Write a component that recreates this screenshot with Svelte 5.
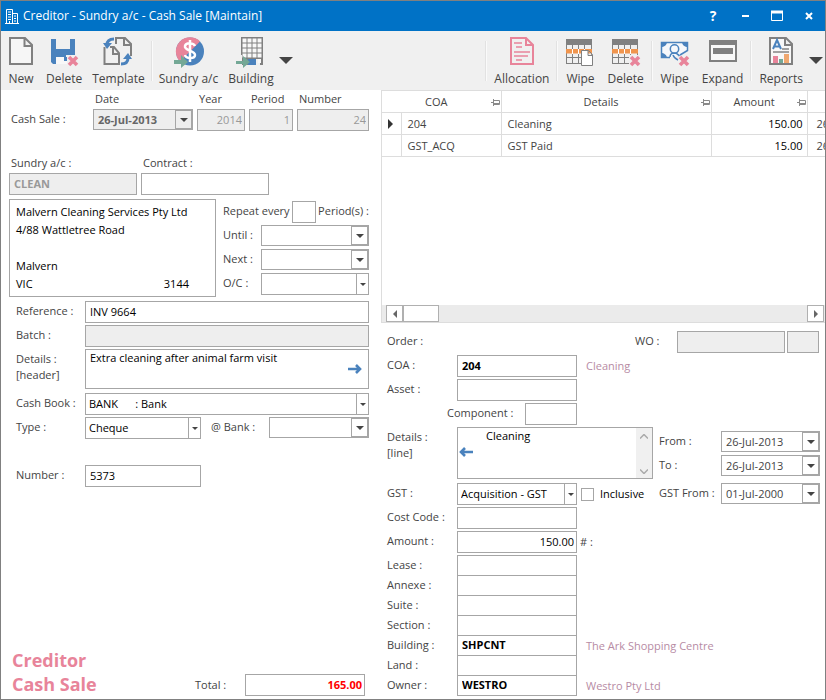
<script>
    const leftTools = [
        { icon: "new", text: "New" },
        { icon: "delete", text: "Delete" },
        { icon: "template", text: "Template" },
        { sep: true },
        { icon: "sundry", text: "Sundry a/c" },
        { icon: "building", text: "Building" }
    ];

    const rightTools = [
        { sep: true },
        { icon: "allocation", text: "Allocation" },
        { sep: true },
        { icon: "wipeRow", text: "Wipe" },
        { icon: "deleteRow", text: "Delete" },
        { sep: true },
        { icon: "wipeMoney", text: "Wipe" },
        { icon: "expand", text: "Expand" },
        { sep: true },
        { icon: "reports", text: "Reports" }
    ];

    const lines = [
        { coa: "204", details: "Cleaning", amount: "150.00", from: "26-Jul-2013" },
        { coa: "GST_ACQ", details: "GST Paid", amount: "15.00", from: "26-Jul-2013" }
    ];

    let places = $state([
        { id: "lease", text: "Lease", value: "", note: "" },
        { id: "annexe", text: "Annexe", value: "", note: "" },
        { id: "suite", text: "Suite", value: "", note: "" },
        { id: "section", text: "Section", value: "", note: "" },
        { id: "building", text: "Building", value: "SHPCNT", note: "The Ark Shopping Centre" },
        { id: "land", text: "Land", value: "", note: "" },
        { id: "owner", text: "Owner", value: "WESTRO", note: "Westro Pty Ltd" }
    ]);

    let current = $state(0);
    let inclusive = $state(false);
</script>

{#snippet cross()}
    <path d="M20 20l8 8M28 20l-8 8" stroke="#e8849a" stroke-width="3.6" />
{/snippet}

{#snippet rowGrid()}
    <path d="M1 2h26v6H1z" fill="#808080" />
    <path d="M1.5 8v19M7.5 8v19M13.5 8v19M19.5 8v19M26.5 8v19M1 20.5h26M1 26.5h26" stroke="#808080" />
    <path d="M1 12h26v4.500H1z" fill="#f0954e" />
    <path d="M7.500 12v5M13.500 12v5M19.500 12v5" stroke="#fff" />
{/snippet}

{#snippet icon(name)}
    <svg class="icon" viewBox="0 0 30 30" fill="none" aria-hidden="true">
        {#if name === "new"}
            <path d="M4 1h15l7 7v19H4zM18.500 1v8H26" fill="#f6f6f6" stroke="#808080" stroke-width="2" />
        {:else if name === "delete"}
            <path d="M2 2h5v10h14V2h5v16h-9v4H7v5H4l-2-2z" fill="#4a82bd" />
            <path d="M7 20h11v7H7z" fill="#f8f8f8" />
            <path d="M15 20h3v4h-3z" fill="#4a82bd" />
            {@render cross()}
        {:else if name === "template"}
            <path d="M13 7V1h9l6 6v12M21 1v7h7" stroke="#808080" stroke-width="2" />
            <path d="M1.500 10v17H16V16l-5-6H7M10 10v7h6" stroke="#808080" stroke-width="2" />
            <path d="M11 2C6 2 4 4 4 8" stroke="#4a82bd" stroke-width="3" />
            <path d="M0 6h9l-5 6z" fill="#4a82bd" />
            <path d="M18 27c5 0 7-2 7-6" stroke="#4a82bd" stroke-width="3" />
            <path d="M20 22h9l-4-6z" fill="#4a82bd" />
        {:else if name === "sundry"}
            <circle cx="16" cy="14.500" r="14" fill="#4a82bd" />
            <path d="M6 24.500A14 14 0 0 1 26 4.500z" fill="#e8849a" />
            <path d="M21 9c-1-3-9-4-10 0-1 5 10 4 10 9 0 4-9 4-10 0M16 3v22" stroke="#fff" stroke-width="2.500" />
            <path d="M0 23h7v-5l7 7-7 6v-4H0z" fill="#74a896" />
        {:else if name === "building"}
            <path d="M5 0h22v28h-3v-6h-5v6H6V18H5z" fill="#808080" />
            <path d="M6.500 1.500h4v4h-4zm5 0h4v4h-4zm5 0h4v4h-4zm5 0h4v4h-4zM6.500 6.500h4v4h-4zm5 0h4v4h-4zm5 0h4v4h-4zm5 0h4v4h-4zM6.500 11.500h4v4h-4zm5 0h4v4h-4zm5 0h4v4h-4zm5 0h4v4h-4zM6.500 16.500h4v4h-4zm5 0h4v4h-4zm5 0h4v4h-4zm5 0h4v4h-4zM22 22h3v4h-3z" fill="#f8f8f8" />
            <path d="M12 22h8v6h-8z" fill="#4a82bd" />
            <path d="M0 24h7v-5l7 6-7 6v-4H0z" fill="#74a896" />
        {:else if name === "allocation"}
            <path d="M4 1h15l7 7v19H4zM19 1v7h7" stroke="#e8849a" stroke-width="2" />
            <path d="M7 6h8M9 10h6M7 15h16M7 19h14M9 23h6" stroke="#e8849a" stroke-width="1.600" />
        {:else if name === "wipeRow"}
            {@render rowGrid()}
            <path d="M16.500 13.500h7l4 4v11h-11zM23 13.500v5h5" fill="#fff" stroke="#808080" />
        {:else if name === "deleteRow"}
            {@render rowGrid()}
            <path d="M18 18h11v12H18z" fill="#f0f0f0" />
            {@render cross()}
        {:else if name === "wipeMoney"}
            <path d="M10 20.500H1.500v-15h26v8L20 18" fill="#f6f8fb" stroke="#4a82bd" stroke-width="1.500" />
            <path d="M1 5h6c0 3-3 5-6 5zM28 5h-6c0 3 3 5 6 5zM1 21h6c0-3-3-5-6-5z" fill="#4a82bd" />
            <circle cx="14.500" cy="12" r="4.200" stroke="#4a82bd" stroke-width="1.500" />
            <path d="M10 20c0-3 2-4 4.500-4s3 1 5 3M13 18c1 3 3 4 5 5" stroke="#4a82bd" stroke-width="1.500" />
            {@render cross()}
        {:else if name === "expand"}
            <path d="M2 4h26v20H2z" fill="#f8f8f8" stroke="#808080" stroke-width="2" />
            <path d="M1 3h28v5H1zM5 11h20v6H5z" fill="#808080" />
        {:else}
            <path d="M4 1h16l6 6v20H4zM19 1v7h7" fill="#f8f8f8" stroke="#808080" stroke-width="2" />
            <path d="M7 12l4-9 4 9M8 9.500h6" stroke="#4a82bd" stroke-width="2" />
            <path d="M16 12h7M7 15h16" stroke="#4a4a4a" />
            <path d="M7 19h5v7H7z" fill="#e8849a" />
            <path d="M13 22h4v4h-4z" fill="#74a896" />
            <path d="M18 17h5v9h-5z" fill="#f0a870" />
        {/if}
    </svg>
{/snippet}

{#snippet tool(t)}
    {#if t.sep}
        <span class="sep"></span>
    {:else}
        <button class="tool">
            {@render icon(t.icon)}
            {t.text}
        </button>
    {/if}
{/snippet}

{#snippet arrow()}
    <svg class="arrow" viewBox="0 0 8 4" aria-hidden="true"><path d="M0 0h8L4 4z" fill="#444" /></svg>
{/snippet}

{#snippet dateBox(id, value, extra)}
    <div class="date {extra}">
        <input {id} {value} disabled={extra === "locked"} />
        <button aria-label="Open calendar" disabled={extra === "locked"}>{@render arrow()}</button>
    </div>
{/snippet}

{#snippet choice(id, value)}
    <div class="choice">
        <select {id}><option>{value}</option></select>
        <span class="drop"><svg viewBox="0 0 6 3" aria-hidden="true"><path d="M0 0h6L3 3z" fill="#444" /></svg></span>
    </div>
{/snippet}

{#snippet pin()}
    <svg class="pin" viewBox="0 0 9 7" fill="none" aria-hidden="true"><path d="M0 3.500h3M2.500 0v7M3 1.500h5.500v4H3M3 4.500h5" stroke="#8a8a8a" /></svg>
{/snippet}

<div class="window">
    <header>
        <svg class="logo" viewBox="0 0 14 16" fill="none" aria-hidden="true">
            <path d="M1.500 15V1.500h6V15M7.500 5.500h5V15M0 15.500h14M3 4h3M3 6.500h3M3 9h3M3 11.500h3M9 8h2M9 10.500h2M9 13h2M4.500 13v2" stroke="#fff" />
        </svg>
        <h1>Creditor - Sundry a/c - Cash Sale [Maintain]</h1>
        <button aria-label="Help"><b>?</b></button>
        <button aria-label="Minimise"><svg viewBox="0 0 12 12"><path d="M3 6h7" stroke="#fff" stroke-width="2" /></svg></button>
        <button aria-label="Maximise"><svg viewBox="0 0 12 12" fill="none"><path d="M.5 1.500h11v9H.5z" stroke="#fff" /><path d="M0 2h12" stroke="#fff" stroke-width="3" /></svg></button>
        <button aria-label="Close"><svg viewBox="0 0 12 12"><path d="M3 3l6 6M9 3l-6 6" stroke="#fff" stroke-width="2" /></svg></button>
    </header>

    <nav>
        <div class="tools tight">
            {#each leftTools as t}{@render tool(t)}{/each}
            <button class="more" aria-label="More records"><svg viewBox="0 0 14 7"><path d="M0 0h14L7 7z" fill="#444" /></svg></button>
        </div>
        <div class="tools">
            {#each rightTools as t}{@render tool(t)}{/each}
            <button class="more" aria-label="More reports"><svg viewBox="0 0 14 7"><path d="M0 0h14L7 7z" fill="#444" /></svg></button>
        </div>
    </nav>

    <main>
        <section class="left">
            <div class="sale">
                <span></span>
                <label for="saleDate">Date</label>
                <label for="year">Year</label>
                <label for="period">Period</label>
                <label for="saleNo">Number</label>
                <span class="name">Cash Sale :</span>
                {@render dateBox("saleDate", "26-Jul-2013", "locked")}
                <input id="year" class="num" value="2014" disabled />
                <input id="period" class="num" value="1" disabled />
                <input id="saleNo" class="num" value="24" disabled />
            </div>

            <div class="account">
                <label for="sundry">Sundry a/c :</label>
                <label for="contract">Contract :</label>
                <input id="sundry" class="bold" value="CLEAN" disabled />
                <input id="contract" />
            </div>

            <div class="party">
                <div class="address">
                    <p>Malvern Cleaning Services Pty Ltd</p>
                    <p>4/88 Wattletree Road</p>
                    <p></p>
                    <p>Malvern</p>
                    <p class="state"><span>VIC</span><span>3144</span></p>
                </div>
                <div class="repeat">
                    <div class="every">
                        <label for="every">Repeat every</label>
                        <input id="every" />
                        <span>Period(s) :</span>
                    </div>
                    <label for="until">Until :</label>
                    {@render dateBox("until", "", "")}
                    <label for="next">Next :</label>
                    {@render dateBox("next", "", "")}
                    <label for="oc">O/C :</label>
                    {@render choice("oc", "")}
                </div>
            </div>

            <div class="entry">
                <label for="reference">Reference :</label>
                <input id="reference" value="INV 9664" />
                <label for="batch">Batch :</label>
                <input id="batch" disabled />
                <label class="tall" for="headDetails">Details :<br />[header]</label>
                <div class="memo head">
                    <textarea id="headDetails">Extra cleaning after animal farm visit</textarea>
                    <button class="copy" aria-label="Copy details to line"><svg viewBox="0 0 14 10" fill="none"><path d="M0 5h12M8 1l4 4-4 4" stroke="#4a82bd" stroke-width="2.600" /></svg></button>
                </div>
            </div>
            <div class="entry">
                <label for="cashBook">Cash Book :</label>
                {@render choice("cashBook", "BANK\u00a0\u00a0\u00a0\u00a0\u00a0\u00a0: Bank")}
                <label for="type">Type :</label>
                <div class="pair">
                    {@render choice("type", "Cheque")}
                    <label for="bank">@ Bank :</label>
                    {@render dateBox("bank", "", "")}
                </div>
            </div>
            <div class="entry cheque">
                <label for="chequeNo">Number :</label>
                <div class="pair"><input id="chequeNo" value="5373" /></div>
            </div>

            <div class="total">
                <h2>Creditor<br />Cash Sale</h2>
                <label for="total">Total :</label>
                <input id="total" class="num bold" value="165.00" readonly />
            </div>
        </section>

        <section class="right">
            <div class="grid">
                <table>
                    <colgroup>
                        <col class="pick" />
                        <col class="coa" />
                        <col class="wide" />
                        <col class="amount" />
                        <col />
                    </colgroup>
                    <thead>
                        <tr>
                            <th colspan="2">COA{@render pin()}</th>
                            <th>Details{@render pin()}</th>
                            <th>Amount{@render pin()}</th>
                            <th></th>
                        </tr>
                    </thead>
                    <tbody>
                        {#each lines as line, i}
                            <tr onclick={() => (current = i)}>
                                <td class="marker">{#if current === i}<svg viewBox="0 0 5 10"><path d="M0 0l5 5-5 5z" fill="#333" /></svg>{/if}</td>
                                <td>{line.coa}</td>
                                <td>{line.details}</td>
                                <td class="money">{line.amount}</td>
                                <td>{line.from}</td>
                            </tr>
                        {/each}
                    </tbody>
                </table>
                <div class="scroll">
                    <button aria-label="Scroll left"><svg viewBox="0 0 4 8"><path d="M4 0v8L0 4z" fill="#666" /></svg></button>
                    <span class="thumb"></span>
                    <button class="end" aria-label="Scroll right"><svg viewBox="0 0 4 8"><path d="M0 0v8l4-4z" fill="#666" /></svg></button>
                </div>
            </div>

            <div class="form">
                <div class="row">
                    <span class="name">Order :</span>
                    <span></span>
                    <div class="wo">
                        <label for="wo">WO :</label>
                        <input id="wo" disabled />
                        <input aria-label="WO line" disabled />
                    </div>
                </div>
                <div class="row">
                    <label for="coa">COA :</label>
                    <input id="coa" class="bold" value="204" />
                    <span class="note">Cleaning</span>
                </div>
                <div class="row">
                    <label for="asset">Asset :</label>
                    <input id="asset" />
                </div>
                <div class="row">
                    <div class="component">
                        <label for="component">Component :</label>
                        <input id="component" />
                    </div>
                </div>
                <div class="row">
                    <label class="tall" for="lineDetails">Details :<br />[line]</label>
                    <div class="memo line">
                        <textarea id="lineDetails">Cleaning</textarea>
                        <button class="copy" aria-label="Copy details to header"><svg viewBox="0 0 14 10" fill="none"><path d="M14 5H2M6 1L2 5l4 4" stroke="#4a82bd" stroke-width="2.600" /></svg></button>
                        <span class="track">
                            <svg viewBox="0 0 8 5" fill="none"><path d="M0 4.500l4-4 4 4" stroke="#aaa" stroke-width="1.500" /></svg>
                            <svg viewBox="0 0 8 5" fill="none"><path d="M0 .5l4 4 4-4" stroke="#aaa" stroke-width="1.500" /></svg>
                        </span>
                    </div>
                    <div class="dates">
                        <label for="from">From :</label>
                        {@render dateBox("from", "26-Jul-2013", "")}
                        <label for="to">To :</label>
                        {@render dateBox("to", "26-Jul-2013", "")}
                    </div>
                </div>
                <div class="row gst">
                    <label for="gst">GST :</label>
                    {@render choice("gst", "Acquisition - GST")}
                    <label class="check"><input type="checkbox" bind:checked={inclusive} />Inclusive</label>
                    <label class="side" for="gstFrom">GST From :</label>
                    {@render dateBox("gstFrom", "01-Jul-2000", "")}
                </div>
                <div class="row">
                    <label for="cost">Cost Code :</label>
                    <input id="cost" />
                </div>
                <div class="row">
                    <label for="amount">Amount :</label>
                    <input id="amount" class="num" value="150.00" />
                    <span class="hash"># :</span>
                </div>
                <div class="places">
                    {#each places as place}
                        <div class="row">
                            <label for={place.id}>{place.text} :</label>
                            <input id={place.id} class="bold" bind:value={place.value} />
                            <span class="note">{place.note}</span>
                        </div>
                    {/each}
                </div>
            </div>
        </section>
    </main>
</div>

<style>
    :global(body) {
        background: #fff;
    }
    .window {
        box-sizing: border-box;
        min-height: 100vh;
        display: flex;
        flex-direction: column;
        border: 1px solid #808080;
        font: 11px/16px "Open Sans", "Noto Sans", sans-serif;
        color: #444;
    }
    .window :global(*) {
        box-sizing: border-box;
    }
    button, input, select, textarea {
        font: inherit;
        color: inherit;
        margin: 0;
        border-radius: 0;
    }
    button {
        padding: 0;
        border: 0;
        background: none;
    }
    svg {
        display: block;
    }

    header {
        display: flex;
        align-items: center;
        height: 30px;
        padding: 0 6px 0 4px;
        background: #0072c6;
        color: #fff;
    }
    .logo {
        width: 14px;
        height: 16px;
    }
    h1 {
        flex: 1;
        margin: 0 0 0 4px;
        font-size: 12px;
        font-weight: 400;
    }
    header button {
        display: flex;
        justify-content: center;
        width: 20px;
        margin-left: 12px;
        font-size: 14px;
    }
    header svg {
        width: 12px;
    }

    nav {
        display: flex;
        justify-content: space-between;
        height: 59px;
        padding: 5px 2px 0 0;
        background: #f0f0f0;
    }
    .tools {
        display: flex;
        align-items: flex-start;
    }
    .tool {
        display: flex;
        flex-direction: column;
        align-items: center;
        padding: 0 6px;
        font-size: 12px;
        line-height: 18px;
    }
    .tight .tool {
        padding: 0 5px;
    }
    .icon {
        width: 30px;
        height: 30px;
        margin: 1px 0 3px;
        overflow: visible;
    }
    .sep {
        width: 2px;
        height: 40px;
        margin: 5px 1px 0;
        border-left: 1px solid #e2e2e2;
        background: #fafafa;
    }
    .more {
        width: 14px;
        margin-top: 21px;
    }

    main {
        flex: 1;
        display: grid;
        grid-template-columns: minmax(0, 380fr) minmax(0, 444fr);
    }
    input, select, textarea {
        width: 100%;
        min-width: 0;
        height: 22px;
        padding: 0 4px 2px;
        border: 1px solid #a6a6a6;
        background: #fff;
        color: #000;
        outline: none;
    }
    input:disabled {
        background: #eee;
        color: #999;
    }
    .bold {
        font-weight: 700;
    }
    .num {
        text-align: right;
        padding-right: 2px;
    }
    label, .name {
        white-space: nowrap;
    }

    .date {
        display: flex;
        height: 21px;
        border: 1px solid #a6a6a6;
    }
    .date input {
        flex: 1;
        height: 19px;
        padding-bottom: 0;
        border: 0;
        color: #444;
    }
    .date button {
        display: flex;
        align-items: center;
        justify-content: center;
        width: 17px;
        border: 1px solid #a6a6a6;
    }
    .arrow {
        width: 8px;
    }
    .locked, .locked input {
        background: #eee;
        color: #666;
        font-weight: 700;
    }
    .choice {
        position: relative;
    }
    .choice select {
        display: block;
        appearance: none;
        padding-left: 3px;
    }
    .drop {
        position: absolute;
        top: 1px;
        right: 1px;
        bottom: 1px;
        display: flex;
        align-items: center;
        justify-content: center;
        width: 12px;
        border-left: 1px solid #a6a6a6;
        pointer-events: none;
    }
    .drop svg {
        width: 6px;
    }

    .left {
        display: flex;
        flex-direction: column;
        padding: 1px 12px 3px 8px;
    }
    .sale {
        display: grid;
        grid-template-columns: 80px 25fr 12fr 11fr 18fr;
        gap: 2px 4px;
    }
    .sale label, .account label, .sale .name {
        padding-left: 2px;
    }
    .sale .name {
        line-height: 20px;
    }
    .account {
        display: grid;
        grid-template-columns: 128fr 128fr 96fr;
        gap: 2px 4px;
        margin: 24px 0 4px;
    }
    .account input:first-of-type {
        grid-column: 1;
    }
    .party {
        display: grid;
        grid-template-columns: 207fr 146fr;
        gap: 7px;
    }
    .address {
        height: 98px;
        padding: 3px 6px;
        border: 1px solid #a6a6a6;
        color: #000;
    }
    .address p {
        height: 18px;
        margin: 0;
        line-height: 18px;
        white-space: nowrap;
    }
    .address .state {
        display: flex;
        justify-content: space-between;
        padding-right: 20px;
    }
    .repeat {
        display: grid;
        grid-template-columns: 38px 1fr;
        grid-auto-rows: 22px;
        gap: 2px 0;
        padding-top: 2px;
        line-height: 20px;
    }
    .every {
        grid-column: span 2;
        display: flex;
        justify-content: space-between;
        white-space: nowrap;
    }
    .every input {
        width: 24px;
    }
    .entry {
        display: grid;
        grid-template-columns: 69px minmax(0, 1fr);
        row-gap: 2px;
        margin-top: 4px;
        padding-left: 7px;
        line-height: 20px;
    }
    .cheque {
        margin-top: 26px;
    }
    .tall {
        padding-top: 2px;
        line-height: 16px;
    }
    .pair {
        display: grid;
        grid-template-columns: 116fr 68fr 100fr;
    }
    .pair label {
        padding-left: 10px;
    }
    .memo {
        position: relative;
    }
    textarea {
        display: block;
        height: 100%;
        resize: none;
        overflow: hidden;
        line-height: 16px;
    }
    .head {
        height: 40px;
    }
    .copy {
        position: absolute;
        width: 14px;
    }
    .head .copy {
        right: 7px;
        top: 15px;
    }
    .total {
        display: grid;
        grid-template-columns: 186px 50px 1fr;
        align-items: end;
        margin-top: auto;
        padding-right: 4px;
        line-height: 20px;
    }
    .total label {
        padding-bottom: 1px;
    }
    .total input {
        color: #f00;
    }
    h2 {
        margin: 0;
        padding-left: 3px;
        font-size: 18px;
        line-height: 24px;
        color: #e8849a;
    }

    .right {
        display: flex;
        flex-direction: column;
    }
    .grid {
        flex: 1;
        display: flex;
        flex-direction: column;
        min-height: 233px;
        overflow: hidden;
        border-left: 1px solid #ddd;
        border-bottom: 1px solid #ddd;
    }
    table {
        width: 520px;
        table-layout: fixed;
        border-collapse: collapse;
    }
    th, td {
        height: 22px;
        padding: 0 6px;
        border: 1px solid #ddd;
        border-left: 0;
        text-align: left;
        font-weight: 400;
        white-space: nowrap;
    }
    th {
        position: relative;
        padding-right: 16px;
        text-align: center;
    }
    .pick {
        width: 19px;
    }
    .coa {
        width: 100px;
    }
    .wide {
        width: 210px;
    }
    .amount {
        width: 96px;
    }
    .marker svg {
        width: 5px;
        height: 10px;
    }
    .money {
        padding-right: 4px;
        text-align: right;
        color: #000;
    }
    td:last-child {
        padding-left: 9px;
    }
    .pin {
        position: absolute;
        top: 8px;
        right: 1px;
        width: 9px;
    }
    .scroll {
        display: flex;
        height: 17px;
        margin-top: auto;
        padding: 0 1px 0 4px;
        background: #ebebeb;
    }
    .scroll button {
        display: flex;
        align-items: center;
        justify-content: center;
        width: 17px;
        border: 1px solid #b0b0b0;
        background: #fff;
    }
    .scroll svg {
        width: 4px;
    }
    .scroll .end {
        margin-left: auto;
    }
    .thumb {
        width: 36px;
        border: 1px solid #b0b0b0;
        background: #fff;
    }

    .form {
        display: flex;
        flex-direction: column;
        gap: 2px;
        padding: 8px 5px 3px 6px;
        line-height: 20px;
    }
    .row {
        display: grid;
        grid-template-columns: 70px 120fr 76fr 68px 99fr;
    }
    .wo {
        grid-column: 3 / 6;
        display: grid;
        grid-template-columns: 98px 108fr 32fr;
        column-gap: 2px;
        padding-right: 1px;
    }
    .wo label {
        padding-left: 58px;
    }
    .note {
        grid-column: 3 / 6;
        padding-left: 9px;
        line-height: 22px;
        color: #b78ba4;
    }
    .component {
        grid-column: 1 / 3;
        display: grid;
        grid-template-columns: 138px 1fr;
    }
    .component label {
        padding-left: 60px;
    }
    .line {
        grid-column: 2 / 4;
        height: 52px;
    }
    .line textarea {
        padding-left: 28px;
    }
    .line .copy {
        left: 2px;
        top: 20px;
    }
    .track {
        position: absolute;
        top: 1px;
        right: 1px;
        bottom: 1px;
        display: flex;
        flex-direction: column;
        justify-content: space-between;
        align-items: center;
        width: 16px;
        padding: 6px 0 4px;
        background: #f0f0f0;
    }
    .track svg {
        width: 8px;
    }
    .dates {
        grid-column: 4 / 6;
        display: grid;
        grid-template-columns: 68px 1fr;
        grid-auto-rows: 22px;
        gap: 2px 0;
        padding-top: 4px;
    }
    .dates label, .side {
        padding-left: 6px;
    }
    .gst {
        margin-top: 2px;
    }
    .check {
        display: flex;
        align-items: center;
        gap: 6px;
        padding-left: 4px;
        color: #000;
    }
    .check input {
        appearance: none;
        flex: none;
        width: 13px;
        height: 13px;
        padding: 0;
    }
    .check input:checked {
        background: #4a82bd;
    }
    .hash {
        padding-left: 3px;
        line-height: 22px;
    }
    .places .row {
        height: 20px;
    }
    .places .row:last-child {
        height: 21px;
    }
    .places input {
        height: 21px;
    }
</style>
